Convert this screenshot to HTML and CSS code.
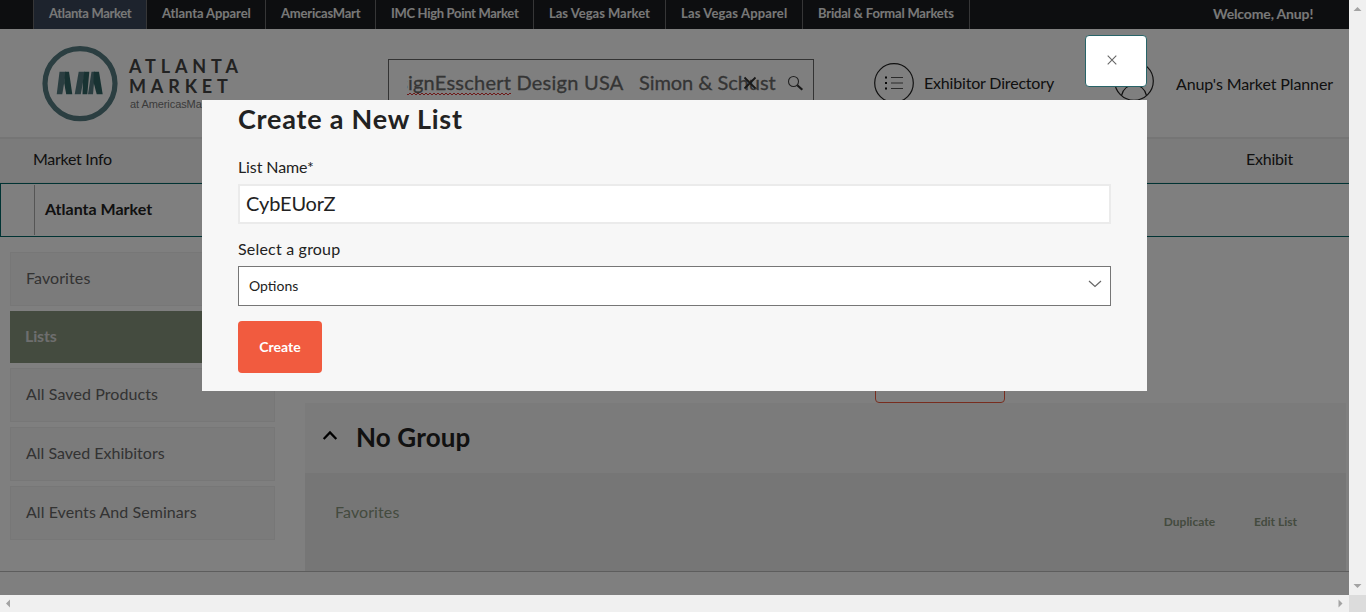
FILE: index.html
```
<!DOCTYPE html>
<html lang="en">
<head>
<meta charset="utf-8">
<title>Market Planner - Lists</title>
<link rel="stylesheet" href="styles.css">
</head>
<body>
<div class="viewport">
  <div class="page">
    <nav class="topbar">
      <a class="tab tab-active">Atlanta Market</a>
      <a class="tab">Atlanta Apparel</a>
      <a class="tab">AmericasMart</a>
      <a class="tab">IMC High Point Market</a>
      <a class="tab">Las Vegas Market</a>
      <a class="tab">Las Vegas Apparel</a>
      <a class="tab">Bridal &amp; Formal Markets</a>
      <span class="welcome">Welcome, Anup!</span>
    </nav>

    <header class="header">
      <div class="logo">
        <svg class="logo-mark" width="76" height="76" viewBox="0 0 76 76">
          <circle cx="38" cy="37.600" r="35" fill="none" stroke="#567d82" stroke-width="5.200"/>
          <path d="M17.500 25.800H24L20.300 48.300H14.700z" fill="#567d82"/>
          <path d="M23.200 25.800H27L30.300 48.300H24.200L22.200 37z" fill="#306465"/>
          <path d="M36.700 25.800H43L38.800 48.300H32.700z" fill="#567d82"/>
          <path d="M42.300 25.800H47.300L45.300 48.300H40.500L41 34z" fill="#306465"/>
          <path d="M49.500 25.800H53L51 48.300H46z" fill="#567d82"/>
          <path d="M51.800 25.800H57L60.700 48.300H54.700L51.500 36z" fill="#306465"/>
        </svg>
        <div class="logo-text">
          <div class="logo-line">ATLANTA</div>
          <div class="logo-line">MARKET</div>
          <div class="logo-sub">at AmericasMart</div>
        </div>
      </div>
      <div class="search">
        <div class="search-value"><span class="misspelt">signEsschert</span> Design USA&nbsp;&nbsp; <span class="search-tail">Simon &amp; Schust</span></div>
        <svg class="search-clear" width="14" height="14" viewBox="0 0 14 14"><path d="M1.500 1.500l11 11M12.500 1.500l-11 11" stroke="#303030" stroke-width="1.800"/></svg>
        <svg class="search-icon" width="17" height="17" viewBox="0 0 17 17"><circle cx="6.500" cy="6.500" r="5" fill="none" stroke="#444" stroke-width="1.100"/><path d="M10.300 10.300l5 4.500" stroke="#333" stroke-width="2.200"/></svg>
      </div>
      <a class="directory">
        <svg width="40" height="40" viewBox="0 0 40 40"><circle cx="20" cy="20" r="19.300" fill="none" stroke="#222" stroke-width="1.200"/><path d="M11 14.500h2M11 20h2M11 25.500h2" stroke="#111" stroke-width="2"/><path d="M17 14.500h12M17 20h12M17 25.500h12" stroke="#555" stroke-width="1.100"/></svg>
        <span>Exhibitor Directory</span>
      </a>
      <a class="planner">
        <svg width="40" height="40" viewBox="0 0 40 40"><circle cx="20" cy="20" r="19.300" fill="none" stroke="#222" stroke-width="1.200"/><path d="M7.500 34.500C9.500 27 14 24 20 24s10.500 3 12.500 10.500" fill="none" stroke="#222" stroke-width="1.200"/><circle cx="20" cy="15" r="7" fill="none" stroke="#222" stroke-width="1.200"/></svg>
        <span>Anup's Market Planner</span>
      </a>
    </header>

    <nav class="mainnav"><a class="nav-info">Market Info</a><a class="nav-exhibit">Exhibit</a></nav>
    <div class="crumb"><span>Atlanta Market</span></div>

    <main class="main">
      <aside class="side">
        <a class="item item-fav">Favorites</a>
        <a class="item item-active">Lists</a>
        <a class="item item-prod">All Saved Products</a>
        <a class="item">All Saved Exhibitors</a>
        <a class="item item-events">All Events And Seminars</a>
      </aside>
      <section class="content">
        <div class="actions"><div class="outline-btn"></div></div>
        <div class="group-head">
          <svg width="16" height="11" viewBox="0 0 16 11"><path d="M1.700 9L8 2.500 14.300 9" fill="none" stroke="#000" stroke-width="2.300"/></svg>
          <h2>No Group</h2>
        </div>
        <div class="group-row">
          <a class="row-name">Favorites</a>
          <a class="row-link">Duplicate</a>
          <a class="row-link">Edit List</a>
        </div>
      </section>
    </main>
  </div>

  <div class="scroll-v">
    <svg width="17" height="17" viewBox="0 0 17 17"><path d="M4.500 11h8L8.500 7z" fill="#a3a3a3"/></svg>
    <svg width="17" height="17" viewBox="0 0 17 17"><path d="M4.500 6h8l-4 4z" fill="#a3a3a3"/></svg>
  </div>
  <div class="scroll-h">
    <svg width="17" height="17" viewBox="0 0 17 17"><path d="M10 4.500v8l-4-4z" fill="#a3a3a3"/></svg>
    <svg width="17" height="17" viewBox="0 0 17 17"><path d="M6.500 4.500v8l4-4z" fill="#a3a3a3"/></svg>
  </div>
  <div class="corner"></div>

  <div class="overlay"></div>
  <div class="close"><svg width="10" height="10" viewBox="0 0 10 10"><path d="M.7.700l8.600 8.600M9.300.700L.7 9.300" stroke="#666" stroke-width="1.100"/></svg></div>
  <div class="modal">
    <h1>Create a New List</h1>
    <label class="label-name">List Name*</label>
    <div class="input">CybEUorZ</div>
    <label class="label-group">Select a group</label>
    <div class="select"><span>Options</span><svg width="14" height="8" viewBox="0 0 14 8"><path d="M1 1l6 5.500L13 1" fill="none" stroke="#666" stroke-width="1.200"/></svg></div>
    <div class="create">Create</div>
  </div>
</div>
</body>
</html>
```
FILE: styles.css
```
* { box-sizing: border-box; }
body { margin: 0; overflow: hidden; font-family: Lato, "Liberation Sans", sans-serif; font-size: 16px; color: #222; }
h1, h2 { margin: 0; }
svg { display: block; flex: none; }
.viewport { position: relative; display: grid; grid-template: 595px 17px / 1349px 17px; width: 1366px; height: 612px; }
.page { background: #fff; overflow: hidden; }

/* top bar */
.topbar { display: grid; grid-template-columns: 114px 119px 110px 158px 132px 137px 167px 1fr; height: 29px; padding-left: 33px; background: #1b1d21; color: #f0f0f0; font-size: 13px; font-weight: 700; line-height: 27px; white-space: nowrap; }
.tab { padding-left: 15px; border-right: 1px solid #6d6d6f; letter-spacing: -.08px; }
.tab-active { border-left: 1px solid #6d6d6f; background: #3a465a; letter-spacing: -.34px; }
.tab:nth-child(3) { letter-spacing: -.2px; }
.tab:nth-child(4) { letter-spacing: -.32px; }
.tab:nth-child(5) { letter-spacing: 0; }
.tab:nth-child(6) { letter-spacing: .15px; }
.tab:nth-child(7) { letter-spacing: -.19px; }
.welcome { padding-left: 243px; font-size: 14px; line-height: 28px; letter-spacing: -.15px; }

/* header */
.header { display: flex; align-items: flex-start; height: 108px; padding-left: 42px; white-space: nowrap; }
.logo { display: flex; width: 346px; padding-top: 17px; }
.logo-text { padding: 10px 0 0 11px; }
.logo-line { height: 19.500px; font-size: 18px; font-weight: 700; line-height: 20px; letter-spacing: 4.850px; color: #444; }
.logo-sub { margin: 2px 0 0 1px; font: 11px/14px "Liberation Sans", sans-serif; letter-spacing: -.08px; color: #777; }
.search { display: flex; align-items: center; position: relative; width: 426px; height: 49px; margin-top: 30px; padding: 0 0 0 18px; border: 1px solid #666; }
.search-value { width: 370px; margin-top: -3px; overflow: hidden; font-size: 20px; line-height: 34px; letter-spacing: .24px; color: #6a6a6a; white-space: pre; text-indent: -8px; -webkit-text-stroke: .3px #6a6a6a; }
.search-tail { letter-spacing: -.05px; }
.misspelt {
  padding-bottom: 1px;
  background:
    repeating-linear-gradient(90deg, #d33 0 2px, transparent 2px 4px) 0 100% / 100% 1px no-repeat,
    repeating-linear-gradient(90deg, transparent 0 2px, #d33 2px 4px) 0 calc(100% - 1px) / 100% 1px no-repeat;
}
.search-clear { position: absolute; left: 354px; top: 16px; }
.search-icon { margin-left: 10px; }
.directory { display: flex; align-items: center; gap: 10px; margin: 34px 0 0 60px; letter-spacing: -.18px; }
.planner { display: flex; align-items: center; gap: 22px; height: 40px; margin: 34px 0 0 60px; letter-spacing: -.1px; }
.directory span { margin-top: -1px; }
.planner svg { margin-top: -4px; }

.mainnav { display: flex; justify-content: space-between; height: 46px; padding: 0 56px 0 33px; border-top: 2px solid #ebebeb; border-bottom: 1px solid #eee; background: #f6f6f6; line-height: 40px; }
.nav-info { letter-spacing: -.28px; }
.nav-exhibit { letter-spacing: -.2px; }
.crumb { height: 54px; padding: 1px 0 1px 33px; border: 1px solid #006666; border-right: 0; }
.crumb span { display: block; height: 50px; padding-left: 10px; border-left: 1px solid #aaa; font-weight: 700; line-height: 48px; }

/* body */
.main { display: flex; height: 335px; padding-left: 10px; border-bottom: 1px solid #bababa; }
.side { display: flex; flex-direction: column; gap: 5px; width: 265px; padding-top: 15px; }
.item { height: 54px; padding-left: 15px; border: 1px solid #efefef; background: #f6f6f6; color: #666; line-height: 50px; letter-spacing: 0; }
.item-fav { letter-spacing: .1px; }
.item-prod { letter-spacing: .08px; }
.item-events { letter-spacing: .06px; }
.item-active { height: 52px; border: 0; background: #88967e; color: #ddd; font-weight: 700; letter-spacing: -.15px; }
.content { width: 1041px; margin-left: 30px; }
.actions { height: 166px; padding: 114px 0 0 570px; }
.outline-btn { width: 130px; height: 52px; border: 1px solid #f15b3f; border-radius: 4px; }
.group-head { display: flex; align-items: center; gap: 18px; height: 70px; padding-left: 17px; background: #f6f6f6; }
.group-head svg { margin-top: -5px; }
.group-head h2 { margin-top: -2px; font-size: 26px; line-height: 36px; letter-spacing: .15px; }
.group-row { display: flex; height: 98px; padding: 27px 49px 0 30px; background: #ececec; color: #88967e; line-height: 24px; }
.row-name { flex: 1; letter-spacing: .1px; }
.row-link { margin: 10px 0 0 39px; font-size: 12px; font-weight: 700; }

/* scroll bars */
.scroll-v, .scroll-h { z-index: 2; display: flex; justify-content: space-between; background: #f0f0f0; }
.scroll-v { flex-direction: column; }
.scroll-h { grid-column: 1; }
.corner { z-index: 2; background: #dcdcdc; }

/* dialog */
.overlay { position: absolute; inset: 0 17px 17px 0; background: rgba(0, 0, 0, .5); }
.close { position: absolute; left: 1085px; top: 35px; display: flex; align-items: center; justify-content: center; width: 62px; height: 52px; padding: 0 9px 2px 0; border: 1px solid #286468; border-radius: 4px; background: #fff; }
.modal { position: absolute; left: 202px; top: 100px; width: 945px; height: 291px; padding: 0 36px; background: #f7f7f7; }
.modal h1 { height: 40px; font-size: 27px; line-height: 38px; letter-spacing: .77px; white-space: nowrap; }
.modal label { display: block; height: 24px; line-height: 22px; }
.modal .label-name { margin-top: 16px; letter-spacing: -.1px; }
.modal .label-group { margin-top: 14px; letter-spacing: .2px; }
.input { height: 40px; margin-top: 4px; padding-left: 6px; border: 2px solid #ebebeb; background: #fff; font-size: 20px; line-height: 35px; letter-spacing: -.1px; }
.select { display: flex; align-items: center; justify-content: space-between; height: 40px; margin-top: 4px; padding: 0 8px 0 10px; border: 1px solid #767676; background: #fff; font-size: 14px; }
.select span { margin-top: -2px; }
.select svg { margin-top: -4px; }
.create { width: 84px; height: 52px; margin-top: 15px; border-radius: 4px; background: #f15b3f; color: #fff; font-size: 14px; font-weight: 700; line-height: 52px; text-align: center; }
```
